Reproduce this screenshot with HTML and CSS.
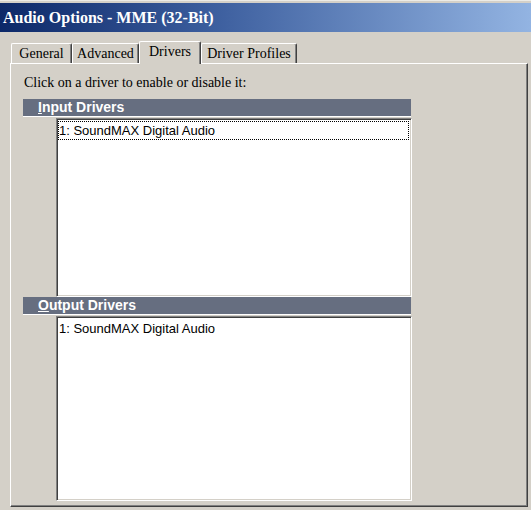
FILE: index.html
```html
<!DOCTYPE html>
<html>
<head>
<meta charset="utf-8">
<link rel="stylesheet" href="styles.css">
</head>
<body>
<div class="window">
  <div class="titlebar"><span class="title">Audio Options - MME (32-Bit)</span></div>
  <div class="tabs">
    <div class="tab tab-general">General</div>
    <div class="tab tab-advanced">Advanced</div>
    <div class="tab tab-drivers active">Drivers</div>
    <div class="tab tab-profiles">Driver Profiles</div>
  </div>
  <div class="panel">
    <div class="hint">Click on a driver to enable or disable it:</div>
    <div class="section">
      <div class="sec-head"><span class="u">I</span>nput Drivers</div>
      <div class="listbox lb-input">
        <div class="item focused">1: SoundMAX Digital Audio</div>
      </div>
    </div>
    <div class="section">
      <div class="sec-head"><span class="u">O</span>utput Drivers</div>
      <div class="listbox lb-output">
        <div class="item">1: SoundMAX Digital Audio</div>
      </div>
    </div>
  </div>
</div>
</body>
</html>
```

FILE: styles.css
```css
* { box-sizing: border-box; }
html, body {
  margin: 0;
  padding: 0;
  background: #d4d0c8;
  width: 531px;
  height: 510px;
  overflow: hidden;
}
.window {
  width: 531px;
  height: 510px;
  padding-top: 2px;
  border-top: 1px solid #ecebe6;
  background: #d4d0c8;
  font-family: "Liberation Serif", "Times New Roman", serif;
  color: #000;
}
.titlebar {
  height: 29px;
  display: flex;
  align-items: center;
  padding-left: 3px;
  background: linear-gradient(to right, #0c2868 0%, #3c5e9e 40%, #93b4e2 100%);
}
.title {
  color: #fff;
  font-weight: bold;
  font-size: 16px;
}
.tabs {
  display: flex;
  align-items: flex-end;
  height: 22px;
  margin-top: 9px;
  padding-left: 11px;
  position: relative;
  z-index: 2;
  font-size: 14px;
}
.tab {
  height: 20px;
  border-top: 1px solid #fff;
  border-left: 1px solid #fff;
  border-right: 1px solid #404040;
  box-shadow: inset -1px 0 0 #808080;
  border-radius: 2px 2px 0 0;
  display: flex;
  align-items: center;
  justify-content: center;
  padding-top: 1px;
}
.tab-general { width: 61px; }
.tab-advanced { width: 67px; }
.tab-drivers { width: 62px; }
.tab-profiles { width: 96px; }
.tab.active {
  height: 23px;
  margin-bottom: -1px;
  background: #d4d0c8;
  align-items: flex-start;
  padding-top: 2px;
}
.panel {
  margin: 0 3px 0 10px;
  height: 444px;
  border-top: 1px solid #fff;
  border-left: 1px solid #fff;
  border-right: 1px solid #404040;
  border-bottom: 1px solid #404040;
  box-shadow: inset -1px -1px 0 #808080;
  padding: 11px 0 0 12px;
}
.hint {
  font-size: 14px;
  line-height: 15px;
  padding-left: 1px;
  height: 24px;
}
.sec-head {
  width: 388px;
  height: 18px;
  background: #666e80;
  color: #fff;
  font-family: "Liberation Sans", Arial, sans-serif;
  font-weight: bold;
  font-size: 14px;
  line-height: 17px;
  padding-left: 15px;
  border-bottom: 1px solid #fff;
  margin-bottom: 1px;
}
.u { text-decoration: underline; text-underline-offset: 1px; }
.listbox {
  margin-left: 33px;
  width: 356px;
  background: #fff;
  border-top: 1px solid #808080;
  border-left: 1px solid #808080;
  border-right: 1px solid #fff;
  border-bottom: 1px solid #fff;
  box-shadow: inset 1px 1px 0 #404040, inset -1px -1px 0 #d4d0c8;
  padding: 2px 2px 2px 1px;
  font-family: "Liberation Sans", Arial, sans-serif;
  font-size: 13px;
}
.lb-input { height: 179px; }
.lb-output { height: 185px; }
.item {
  height: 19px;
  line-height: 17px;
  padding-left: 0;
  border: 1px dotted transparent;
}
.item.focused {
  border: 1px dotted #000;
}
```
